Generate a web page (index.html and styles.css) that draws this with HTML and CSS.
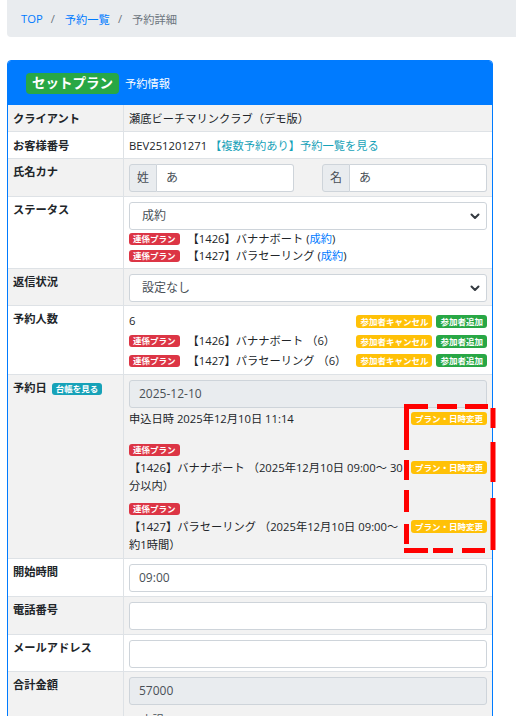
FILE: index.html
```html
<!DOCTYPE html>
<html lang="ja">
<head>
<meta charset="utf-8">
<title>予約詳細</title>
<link rel="stylesheet" href="styles.css">
</head>
<body>
<div class="page">
  <nav class="crumb">
    <a class="crumb-link" href="#">TOP</a><span class="sep">/</span>
    <a class="crumb-link" href="#">予約一覧</a><span class="sep">/</span>
    <span class="crumb-current">予約詳細</span>
  </nav>

  <div class="card">
    <div class="card-head">
      <span class="plan-badge">セットプラン</span>
      <span class="head-title">予約情報</span>
    </div>
    <table class="info">
      <tr class="r-text">
        <th>クライアント</th>
        <td>瀬底ビーチマリンクラブ（デモ版）</td>
      </tr>
      <tr class="r-text">
        <th>お客様番号</th>
        <td>BEV251201271 <a class="info-link" href="#">【複数予約あり】予約一覧を見る</a></td>
      </tr>
      <tr>
        <th>氏名カナ</th>
        <td>
          <div class="name-row">
            <div class="igroup"><span class="iprefix">姓</span><span class="ctrl ctrl-in">あ</span></div>
            <div class="igroup"><span class="iprefix">名</span><span class="ctrl ctrl-in">あ</span></div>
          </div>
        </td>
      </tr>
      <tr>
        <th>ステータス</th>
        <td>
          <div class="ctrl sel">成約<svg class="chev" width="10" height="7" viewBox="0 0 10 7"><path d="M1.5 1.5 L5 5 L8.5 1.5" fill="none" stroke="#343a40" stroke-width="2" stroke-linecap="round" stroke-linejoin="round"/></svg></div>
          <div class="st-line"><span class="badge b-red">連係プラン</span><span class="st-text">【1426】バナナボート (<a class="blue" href="#">成約</a>)</span></div>
          <div class="st-line"><span class="badge b-red">連係プラン</span><span class="st-text">【1427】パラセーリング (<a class="blue" href="#">成約</a>)</span></div>
        </td>
      </tr>
      <tr class="r-tight">
        <th>返信状況</th>
        <td>
          <div class="ctrl sel">設定なし<svg class="chev" width="10" height="7" viewBox="0 0 10 7"><path d="M1.5 1.5 L5 5 L8.5 1.5" fill="none" stroke="#343a40" stroke-width="2" stroke-linecap="round" stroke-linejoin="round"/></svg></div>
        </td>
      </tr>
      <tr>
        <th>予約人数</th>
        <td>
          <div class="pax-line"><span class="pax-text">6</span><span class="badge b-yellow">参加者キャンセル</span><span class="badge b-green">参加者追加</span></div>
          <div class="pax-line"><span class="pax-text"><span class="badge b-red">連係プラン</span><span class="st-text">【1426】バナナボート （6）</span></span><span class="badge b-yellow">参加者キャンセル</span><span class="badge b-green">参加者追加</span></div>
          <div class="pax-line last"><span class="pax-text"><span class="badge b-red">連係プラン</span><span class="st-text">【1427】パラセーリング （6）</span></span><span class="badge b-yellow">参加者キャンセル</span><span class="badge b-green">参加者追加</span></div>
        </td>
      </tr>
      <tr>
        <th>予約日 <span class="badge b-teal">台帳を見る</span></th>
        <td>
          <div class="ctrl ctrl-in ro">2025-12-10</div>
          <div class="date-line"><span class="date-text">申込日時 2025年12月10日 11:14</span><span class="badge b-yellow">プラン・日時変更</span></div>
          <div class="plan-item first">
            <div class="plan-badge-line"><span class="badge b-red">連係プラン</span></div>
            <div class="date-line multi"><span class="date-text">【1426】バナナボート （2025年12月10日 09:00～ 30<br>分以内）</span><span class="badge b-yellow">プラン・日時変更</span></div>
          </div>
          <div class="plan-item second">
            <div class="plan-badge-line"><span class="badge b-red">連係プラン</span></div>
            <div class="date-line multi"><span class="date-text">【1427】パラセーリング （2025年12月10日 09:00～<br>約1時間）</span><span class="badge b-yellow">プラン・日時変更</span></div>
          </div>
        </td>
      </tr>
      <tr>
        <th>開始時間</th>
        <td><div class="ctrl ctrl-in">09:00</div></td>
      </tr>
      <tr>
        <th>電話番号</th>
        <td><div class="ctrl ctrl-in"></div></td>
      </tr>
      <tr class="r-tight">
        <th>メールアドレス</th>
        <td><div class="ctrl ctrl-in"></div></td>
      </tr>
      <tr>
        <th>合計金額</th>
        <td>
          <div class="ctrl ctrl-in ro">57000</div>
          <div class="sub-note">内訳</div>
        </td>
      </tr>
    </table>
  </div>

  <svg class="highlight" width="93" height="152" viewBox="0 0 93 152">
    <g fill="none" stroke="#ff0000" stroke-width="5">
      <line x1="0" y1="4.5" x2="84" y2="4.5" stroke-dasharray="24 9 20 8 23"/>
      <line x1="2.5" y1="2" x2="2.5" y2="152" stroke-dasharray="46 10 20 10 22 12 20 12"/>
      <line x1="89" y1="6" x2="89" y2="148" stroke-dasharray="20 14 40 16 52"/>
      <line x1="0" y1="148.5" x2="81" y2="148.5" stroke-dasharray="24 5 20 9 23"/>
    </g>
  </svg>
</div>
</body>
</html>
```

FILE: styles.css
```css
html, body {
  margin: 0;
  padding: 0;
  background: #ffffff;
  overflow: hidden;
}

body {
  font-family: "Open Sans", "Noto Sans CJK JP", sans-serif;
  font-size: 11.25px;
  color: #212529;
}

.page {
  position: relative;
  height: 716px;
  overflow: hidden;
}

a {
  text-decoration: none;
}

/* breadcrumb */
.crumb {
  display: flex;
  align-items: center;
  height: 37px;
  margin: 0 -30px 0 7px;
  padding: 0 14px;
  background: #e9ecef;
  border-radius: 0 0 4px 4px;
  font-size: 11.25px;
}

.crumb-link {
  color: #007bff;
}

.sep {
  color: #6c757d;
  padding: 0 10px 0 8px;
}

.crumb-current {
  color: #6c757d;
}

/* card */
.card {
  margin: 23px 23px 0 7px;
  border: 1px solid #007bff;
  border-radius: 4px;
  overflow: hidden;
}

.card-head {
  display: flex;
  align-items: center;
  height: 44px;
  padding: 0 18px;
  background: #007bff;
  color: #ffffff;
}

.plan-badge {
  display: inline-block;
  background: #28a745;
  color: #ffffff;
  font-weight: 700;
  font-size: 13.5px;
  line-height: 21px;
  padding: 0 6px;
  border-radius: 4px;
}

.head-title {
  margin-left: 6px;
  font-size: 11.25px;
}

/* table */
.info {
  width: 100%;
  border-collapse: collapse;
}

.info tr:nth-child(odd) {
  background: #f2f2f2;
}

.info th,
.info td {
  border-top: 1px solid #dee2e6;
  padding: 5px 5px 4px;
  line-height: 16px;
  vertical-align: top;
  text-align: left;
}

.info tr:first-child th,
.info tr:first-child td {
  border-top: none;
}

.info tr.r-tight th,
.info tr.r-tight td {
  padding-bottom: 3px;
}

.info th {
  width: 105px;
  border-right: 1px solid #dee2e6;
  font-weight: 700;
  white-space: nowrap;
}

.info tr.r-text th,
.info tr.r-text td {
  line-height: 17px;
}

.info-link {
  color: #17a2b8;
}

.blue {
  color: #007bff;
}

/* form controls */
.ctrl {
  box-sizing: border-box;
  height: 28px;
  border: 1px solid #ced4da;
  border-radius: 3px;
  background: #ffffff;
  color: #495057;
  font-size: 12px;
  line-height: 26px;
  padding: 0 9px;
}

.ro {
  background: #e9ecef;
}

.sel {
  position: relative;
  padding-left: 12px;
}

.chev {
  position: absolute;
  right: 6px;
  top: 10px;
}

.name-row {
  display: flex;
  gap: 28px;
}

.igroup {
  flex: 1;
  display: flex;
}

.iprefix {
  box-sizing: border-box;
  width: 28px;
  height: 28px;
  border: 1px solid #ced4da;
  border-radius: 3px 0 0 3px;
  background: #e9ecef;
  color: #495057;
  font-size: 12px;
  line-height: 26px;
  text-align: center;
}

.igroup .ctrl {
  flex: 1;
  border-left: none;
  border-radius: 0 3px 3px 0;
}

/* badges */
.badge {
  display: inline-block;
  font-size: 8.5px;
  font-weight: 700;
  line-height: 12px;
  padding: 0 4px;
  border-radius: 3px;
  color: #ffffff;
  white-space: nowrap;
  vertical-align: middle;
}

.b-red { background: #dc3545; }
.b-yellow { background: #ffc107; line-height: 13px; }
.b-green { background: #28a745; line-height: 13px; }
.b-teal { background: #17a2b8; margin-left: 2px; }

.st-line {
  display: flex;
  align-items: center;
  height: 17px;
}

.st-text {
  margin-left: 8px;
}

/* passenger lines */
.pax-line {
  display: flex;
  align-items: center;
  gap: 4px;
  height: 20px;
}

.pax-line.last {
  height: 19px;
}

.pax-text {
  flex: 1;
  display: flex;
  align-items: center;
}

/* date block */
.date-line {
  display: flex;
  align-items: flex-start;
  gap: 4px;
  margin-top: 2px;
  line-height: 18px;
}

.date-line .badge {
  margin-top: 2px;
}

.date-text {
  flex: 1;
  white-space: nowrap;
}

.plan-item.first {
  margin-top: 15px;
}

.plan-item.second {
  margin-top: 7px;
}

.plan-badge-line {
  height: 14px;
  display: flex;
  align-items: center;
}

.sub-note {
  margin-top: 6px;
  padding-left: 12px;
  line-height: 18px;
  color: #495057;
}

/* red dashed annotation */
.highlight {
  position: absolute;
  left: 404px;
  top: 402px;
  pointer-events: none;
}
```
